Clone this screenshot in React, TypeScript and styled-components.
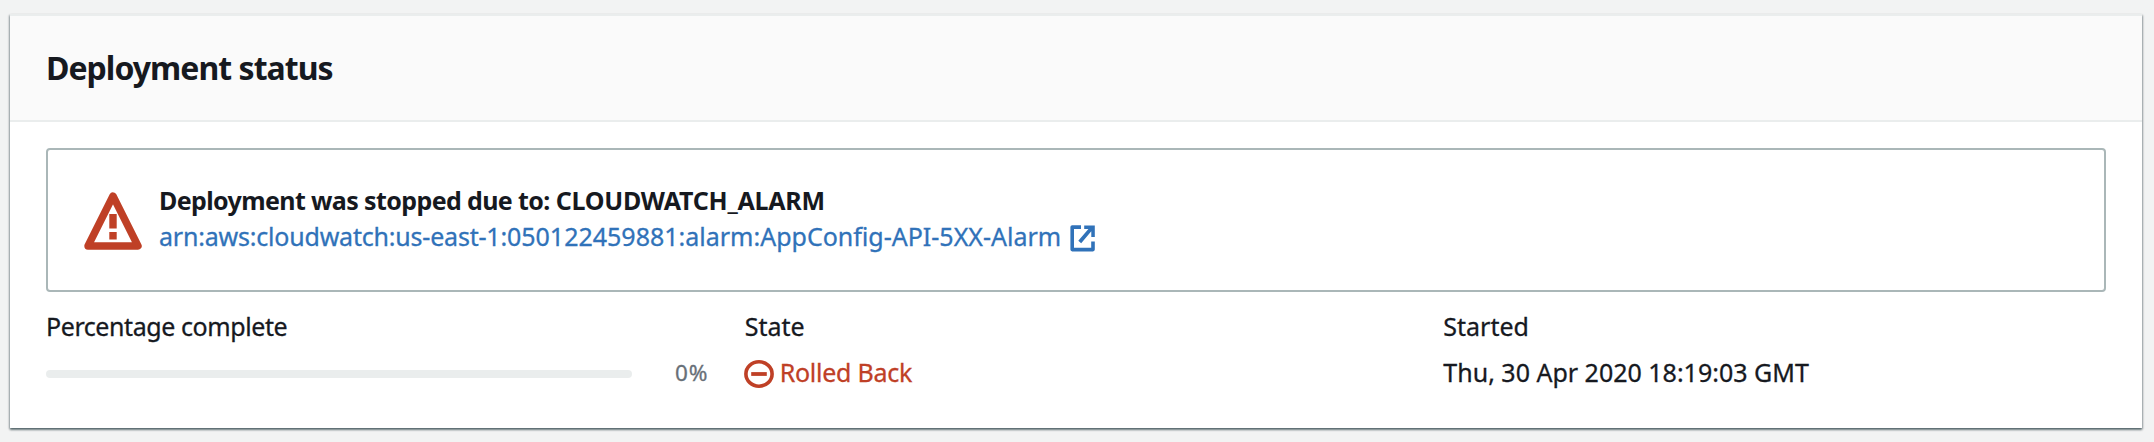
import React from 'react';
import styled, { createGlobalStyle } from 'styled-components';

const GlobalStyle = createGlobalStyle`
  * { box-sizing: border-box; }
  body {
    margin: 0;
    background: #f2f3f3;
    color: #16191f;
    font: 400 25px/36px 'Noto Sans', 'Open Sans', sans-serif;
    overflow: hidden;
  }
`;

const Page = styled.main`
  height: 442px;
  padding: 14px 12px 14px 10px;
`;

const Card = styled.section`
  display: flex;
  flex-direction: column;
  height: 414px;
  background: #fff;
  border-top: 2px solid #eaeded;
  box-shadow: 0 2px 2px 0 rgba(0, 28, 36, 0.45), 1px 1px 2px 0 rgba(0, 28, 36, 0.25),
    -1px 1px 2px 0 rgba(0, 28, 36, 0.25);
`;

const CardHeader = styled.header`
  display: flex;
  align-items: center;
  height: 106px;
  padding: 0 36px;
  background: #fafafa;
  border-bottom: 2px solid #eaeded;
`;

const Title = styled.h2`
  margin: 0;
  font-size: 32px;
  line-height: 44px;
  font-weight: 700;
  letter-spacing: -0.97px;
`;

const CardBody = styled.div`
  padding: 26px 36px;
`;

const Alert = styled.div`
  display: flex;
  gap: 17px;
  height: 144px;
  padding: 32px 36px;
  border: 2px solid #aab7b8;
  border-radius: 4px;
`;

const WarningIcon = styled.svg`
  width: 58px;
  height: 58px;
  margin-top: 10px;
  flex: none;
`;

const AlertText = styled.div`
  display: flex;
  flex-direction: column;
  align-items: flex-start;
  white-space: nowrap;
`;

const AlertHeading = styled.strong`
  font-weight: 700;
`;

const AlarmLink = styled.a`
  display: flex;
  gap: 9px;
  color: #3072b9;
  text-decoration: none;
  -webkit-text-stroke: 0.3px;
`;

const Tracked = styled.span<{ $tracking: number }>`
  letter-spacing: ${({ $tracking }) => $tracking}px;
`;

const ExternalIcon = styled.svg`
  width: 26px;
  height: 27px;
  margin-top: 7px;
`;

const Details = styled.dl`
  display: grid;
  grid-template-columns: repeat(3, 1fr);
  column-gap: 36px;
  margin: 16px 0 0;
  white-space: nowrap;
  -webkit-text-stroke: 0.3px;
`;

const Field = styled.div`
  display: flex;
  flex-direction: column;
  gap: 10px;
`;

const Label = styled.dt<{ $tracking?: number }>`
  letter-spacing: ${({ $tracking = 0 }) => $tracking}px;
`;

const Value = styled.dd`
  display: flex;
  height: 36px;
  margin: 0;
`;

const Track = styled.div`
  width: 586px;
  height: 8px;
  margin-top: 16px;
  border-radius: 4px;
  background: #eaeded;
`;

const Percent = styled.span`
  margin-left: 43px;
  color: #687078;
  font-size: 22.5px;
  line-height: 38px;
  letter-spacing: 0.9px;
`;

const Status = styled.span`
  display: flex;
  gap: 6px;
  margin-left: -1px;
  color: #bf4026;
  letter-spacing: -0.25px;
`;

const StatusIcon = styled.svg`
  width: 30px;
  height: 28px;
  margin-top: 6px;
`;

export default function App() {
  return (
    <>
      <GlobalStyle />
      <Page>
        <Card>
          <CardHeader>
            <Title>Deployment status</Title>
          </CardHeader>
          <CardBody>
            <Alert>
              <WarningIcon viewBox="0 0 58 58" aria-hidden="true">
                <path d="M29 4 54 54H4Z" fill="none" stroke="#bf4026" strokeWidth="7.4" strokeLinejoin="round" />
                <path d="M25.3 22h7.4v14.5h-7.4zM25.3 40h7.4v7.5h-7.4z" fill="#bf4026" />
              </WarningIcon>
              <AlertText>
                <AlertHeading>
                  <Tracked $tracking={-0.61}>Deployment was stopped due to: </Tracked>
                  <Tracked $tracking={-0.23}>CLOUDWATCH_ALARM</Tracked>
                </AlertHeading>
                <AlarmLink>
                  <span>
                    <Tracked $tracking={-0.2}>arn:aws:cloudwatch:us-east-1:</Tracked>
                    <Tracked $tracking={0}>050122459881:alarm:AppConfig-API-5XX-Alarm</Tracked>
                  </span>
                  <ExternalIcon viewBox="0 0 26 27" aria-hidden="true">
                    <path d="M11 2.1H2.2V24.6H23V16.5" fill="none" stroke="#3072b9" strokeWidth="3.6" strokeLinejoin="round" />
                    <path d="M14.2.5H24.8V12H21.3V6.2L11.2 18.2 8.3 15.8 18.4 4H14.2Z" fill="#3072b9" />
                  </ExternalIcon>
                </AlarmLink>
              </AlertText>
            </Alert>
            <Details>
              <Field>
                <Label $tracking={-0.42}>Percentage complete</Label>
                <Value>
                  <Track />
                  <Percent>0%</Percent>
                </Value>
              </Field>
              <Field>
                <Label>State</Label>
                <Value>
                  <Status>
                    <StatusIcon viewBox="0 0 30 28" aria-hidden="true">
                      <ellipse cx="15" cy="14" rx="13.1" ry="12.2" fill="none" stroke="#bf4026" strokeWidth="3.6" />
                      <path d="M7.2 14h15.6" stroke="#bf4026" strokeWidth="3.8" />
                    </StatusIcon>
                    Rolled Back
                  </Status>
                </Value>
              </Field>
              <Field>
                <Label>Started</Label>
                <Value>Thu, 30 Apr 2020 18:19:03 GMT</Value>
              </Field>
            </Details>
          </CardBody>
        </Card>
      </Page>
    </>
  );
}
